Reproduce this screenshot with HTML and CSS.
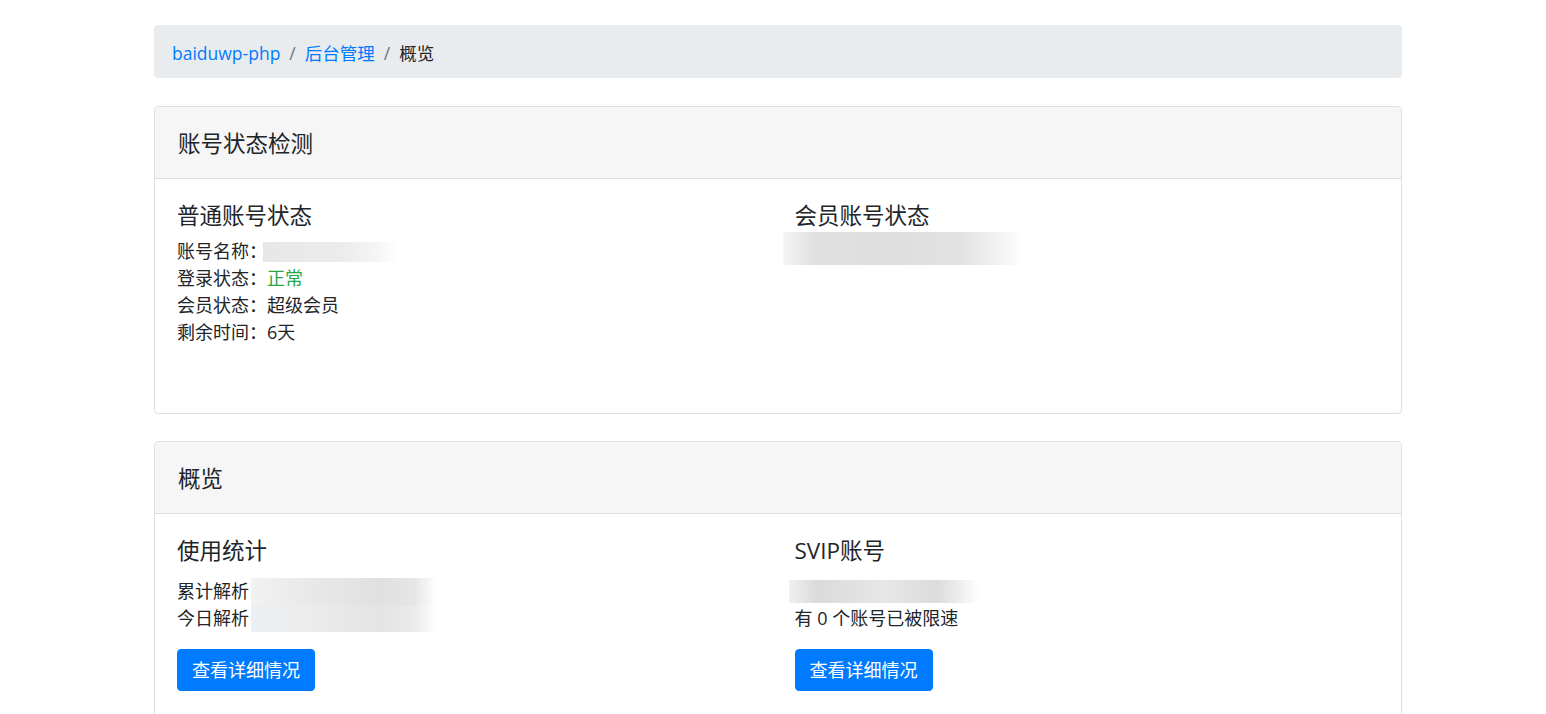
FILE: index.html
```html
<!DOCTYPE html>
<html lang="zh-CN">
<head>
<meta charset="utf-8">
<title>概览</title>
<link rel="stylesheet" href="styles.css">
</head>
<body>
<div class="container">
  <nav class="breadcrumb">
    <a class="crumb-link" href="#">baiduwp-php</a>
    <span class="sep">/</span>
    <a class="crumb-link" href="#">后台管理</a>
    <span class="sep">/</span>
    <span class="crumb-active">概览</span>
  </nav>

  <section class="card card-first">
    <div class="card-header"><h5 class="card-title">账号状态检测</h5></div>
    <div class="card-body">
      <div class="row">
        <div class="col">
          <h5 class="sub-title">普通账号状态</h5>
          <div class="info info-tall">
            <div class="line">账号名称：<span class="blur blur-name"></span></div>
            <div class="line">登录状态：<span class="ok">正常</span></div>
            <div class="line">会员状态：超级会员</div>
            <div class="line">剩余时间：6天</div>
          </div>
        </div>
        <div class="col">
          <h5 class="sub-title">会员账号状态</h5>
          <div class="blur blur-vip"></div>
        </div>
      </div>
    </div>
  </section>

  <section class="card card-second">
    <div class="card-header"><h5 class="card-title">概览</h5></div>
    <div class="card-body">
      <div class="row">
        <div class="col">
          <h5 class="sub-title sub-title-wide">使用统计</h5>
          <div class="info">
            <div class="line">累计解析<span class="blur blur-stat blur-stat-top"></span></div>
            <div class="line">今日解析<span class="blur blur-stat blur-stat-bottom"></span></div>
          </div>
          <a class="btn" href="#">查看详细情况</a>
        </div>
        <div class="col">
          <h5 class="sub-title sub-title-wide">SVIP账号</h5>
          <div class="info">
            <div class="line"><span class="blur blur-svip"></span></div>
            <div class="line">有 0 个账号已被限速</div>
          </div>
          <a class="btn" href="#">查看详细情况</a>
        </div>
      </div>
    </div>
  </section>
</div>
</body>
</html>
```

FILE: styles.css
```css
html, body {
  margin: 0;
  padding: 0;
  background: #ffffff;
}

body {
  padding-left: 10px;
  font-family: "Open Sans", "Noto Sans CJK SC", sans-serif;
  font-size: 18px;
  line-height: 27px;
  color: #212529;
}

.container {
  width: 1248px;
  margin: 0 auto;
  padding-top: 25px;
}

.breadcrumb {
  display: flex;
  align-items: center;
  box-sizing: border-box;
  height: 53px;
  padding: 3px 18px 0;
  background: #e9ecef;
  border-radius: 4px;
  margin-bottom: 28px;
  font-size: 17.5px;
}

.crumb-link {
  color: #007bff;
  text-decoration: none;
}

.sep {
  color: #6c757d;
  padding: 0 9px;
}

.crumb-active {
  color: #212529;
}

.card {
  border: 1px solid #dfdfdf;
  border-radius: 4px;
  margin-bottom: 27px;
  background: #fff;
}

.card-header {
  background: #f6f6f6;
  border-bottom: 1px solid #dfdfdf;
  border-radius: 4px 4px 0 0;
  padding: 24px 23px 21px;
}

.card-title {
  margin: 0;
  font-size: 22.5px;
  line-height: 26px;
  font-weight: 400;
}

.card-body {
  padding: 24px 22px 22px;
}

.card-first .card-body {
  padding-bottom: 23px;
}

.card-second .card-body {
  padding-bottom: 40px;
}

.row {
  display: flex;
  gap: 33px;
}

.col {
  flex: 1 1 0;
  min-width: 0;
}

.sub-title {
  margin: 0 0 9px;
  font-size: 22.5px;
  line-height: 26px;
  font-weight: 400;
}

.sub-title-wide {
  margin-bottom: 14px;
}

.info {
  margin-bottom: 16.5px;
}

.info-tall {
  margin-bottom: 44px;
}

.line {
  height: 27px;
  white-space: nowrap;
}

.ok {
  color: #28a745;
}

.blur {
  display: inline-block;
  vertical-align: top;
}

.blur-name {
  width: 136px;
  height: 20px;
  margin-top: 4px;
  margin-left: -4px;
  background: linear-gradient(90deg, #e6e8e6 0%, #ebebeb 55%, #f4f4f4 80%, #ffffff 100%);
}

.blur-vip {
  display: block;
  width: 240px;
  height: 33px;
  margin-left: -12px;
  margin-top: -6px;
  background: linear-gradient(90deg, #f6f6f6 0%, #e1e1e1 12%, #dedede 45%, #e3e3e3 75%, #f4f4f4 92%, #ffffff 100%);
}

.blur-stat {
  width: 186px;
  height: 27px;
  margin-left: 2px;
}

.blur-stat-top {
  background: linear-gradient(90deg, #f2f2f2 0%, #e9e9e9 30%, #e0e0e0 70%, #e6e6e6 88%, #ffffff 100%);
}

.blur-stat-bottom {
  background: linear-gradient(90deg, #eceff4 0%, #ececec 30%, #e4e4e4 70%, #ebebeb 88%, #ffffff 100%);
}

.blur-svip {
  width: 190px;
  height: 23px;
  margin-left: -6px;
  margin-top: 2px;
  background: linear-gradient(90deg, #f0f0f0 0%, #dadada 15%, #e7e7e7 50%, #dcdcdc 78%, #f6f6f6 95%, #ffffff 100%);
}

.btn {
  display: inline-block;
  padding: 7px 14px;
  border: 1px solid #007bff;
  border-radius: 4px;
  background: #007bff;
  color: #ffffff;
  text-decoration: none;
  font-size: 18px;
  line-height: 26px;
}
```
